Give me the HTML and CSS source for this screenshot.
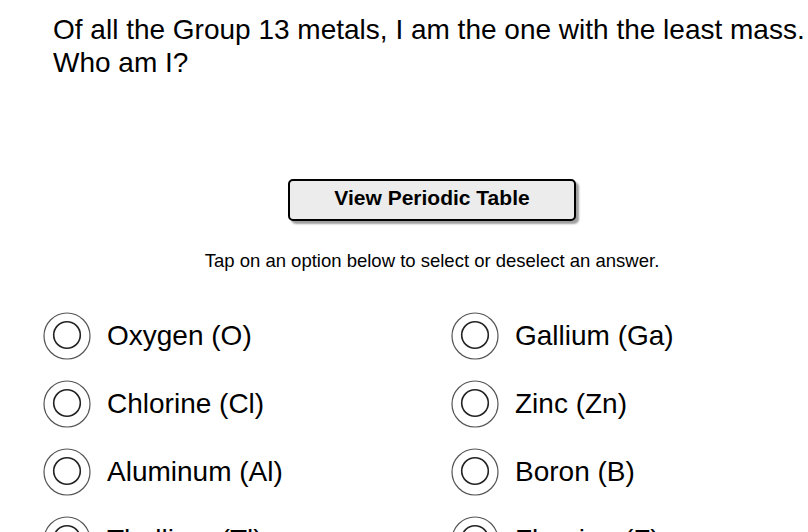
FILE: index.html
```html
<!DOCTYPE html>
<html lang="en">
<head>
<meta charset="utf-8">
<title>Question</title>
<link rel="stylesheet" href="styles.css">
</head>
<body>
<div class="page">
  <p class="question">Of all the Group 13 metals, I am the one with the least mass.<br>Who am I?</p>
  <div class="main">
    <button class="table-btn" type="button">View Periodic Table</button>
    <p class="hint">Tap on an option below to select or deselect an answer.</p>
  </div>
  <div class="options">
    <div class="option"><svg class="radio" viewBox="0 0 48 48" width="48" height="48"><circle cx="24" cy="24" r="23" fill="none" stroke="#555" stroke-width="1.2"/><circle cx="24" cy="23" r="13.3" fill="none" stroke="#222" stroke-width="1.6"/></svg><span>Oxygen (O)</span></div>
    <div class="option"><svg class="radio" viewBox="0 0 48 48" width="48" height="48"><circle cx="24" cy="24" r="23" fill="none" stroke="#555" stroke-width="1.2"/><circle cx="24" cy="23" r="13.3" fill="none" stroke="#222" stroke-width="1.6"/></svg><span>Gallium (Ga)</span></div>
    <div class="option"><svg class="radio" viewBox="0 0 48 48" width="48" height="48"><circle cx="24" cy="24" r="23" fill="none" stroke="#555" stroke-width="1.2"/><circle cx="24" cy="23" r="13.3" fill="none" stroke="#222" stroke-width="1.6"/></svg><span>Chlorine (Cl)</span></div>
    <div class="option"><svg class="radio" viewBox="0 0 48 48" width="48" height="48"><circle cx="24" cy="24" r="23" fill="none" stroke="#555" stroke-width="1.2"/><circle cx="24" cy="23" r="13.3" fill="none" stroke="#222" stroke-width="1.6"/></svg><span>Zinc (Zn)</span></div>
    <div class="option"><svg class="radio" viewBox="0 0 48 48" width="48" height="48"><circle cx="24" cy="24" r="23" fill="none" stroke="#555" stroke-width="1.2"/><circle cx="24" cy="23" r="13.3" fill="none" stroke="#222" stroke-width="1.6"/></svg><span>Aluminum (Al)</span></div>
    <div class="option"><svg class="radio" viewBox="0 0 48 48" width="48" height="48"><circle cx="24" cy="24" r="23" fill="none" stroke="#555" stroke-width="1.2"/><circle cx="24" cy="23" r="13.3" fill="none" stroke="#222" stroke-width="1.6"/></svg><span>Boron (B)</span></div>
    <div class="option"><svg class="radio" viewBox="0 0 48 48" width="48" height="48"><circle cx="24" cy="24" r="23" fill="none" stroke="#555" stroke-width="1.2"/><circle cx="24" cy="23" r="13.3" fill="none" stroke="#222" stroke-width="1.6"/></svg><span>Thallium (Tl)</span></div>
    <div class="option"><svg class="radio" viewBox="0 0 48 48" width="48" height="48"><circle cx="24" cy="24" r="23" fill="none" stroke="#555" stroke-width="1.2"/><circle cx="24" cy="23" r="13.3" fill="none" stroke="#222" stroke-width="1.6"/></svg><span>Fluorine (F)</span></div>
  </div>
</div>
</body>
</html>
```
FILE: styles.css
```css
html, body {
  margin: 0;
  padding: 0;
  overflow: hidden;
  background: #fff;
}

body {
  font-family: "Liberation Sans", Arial, Helvetica, sans-serif;
  color: #000;
  width: 808px;
  height: 532px;
}

.page {
  width: 808px;
}

.question {
  margin: 0;
  padding: 13px 0 0 53px;
  font-size: 28px;
  line-height: 33px;
  white-space: nowrap;
}

.main {
  width: 760px;
  margin: 100px 0 0 52px;
  display: flex;
  flex-direction: column;
  align-items: center;
}

.table-btn {
  width: 288px;
  height: 42px;
  margin: 0;
  padding: 0 0 5px 0;
  border: 2px solid #000;
  border-radius: 5px;
  background: #ececec;
  box-shadow: 3px 3px 2px rgba(0, 0, 0, 0.38);
  font-family: "Liberation Sans", Arial, Helvetica, sans-serif;
  font-weight: bold;
  font-size: 21px;
  color: #000;
}

.hint {
  margin: 29px 0 0 0;
  font-size: 18.5px;
  line-height: 22px;
}

.options {
  width: 765px;
  margin: 30px 0 0 43px;
  display: grid;
  grid-template-columns: 408px 1fr;
  grid-auto-rows: 68px;
}

.option {
  display: flex;
  align-items: center;
  gap: 16px;
  font-size: 28px;
  white-space: nowrap;
}

.radio {
  flex: none;
  display: block;
}
```
